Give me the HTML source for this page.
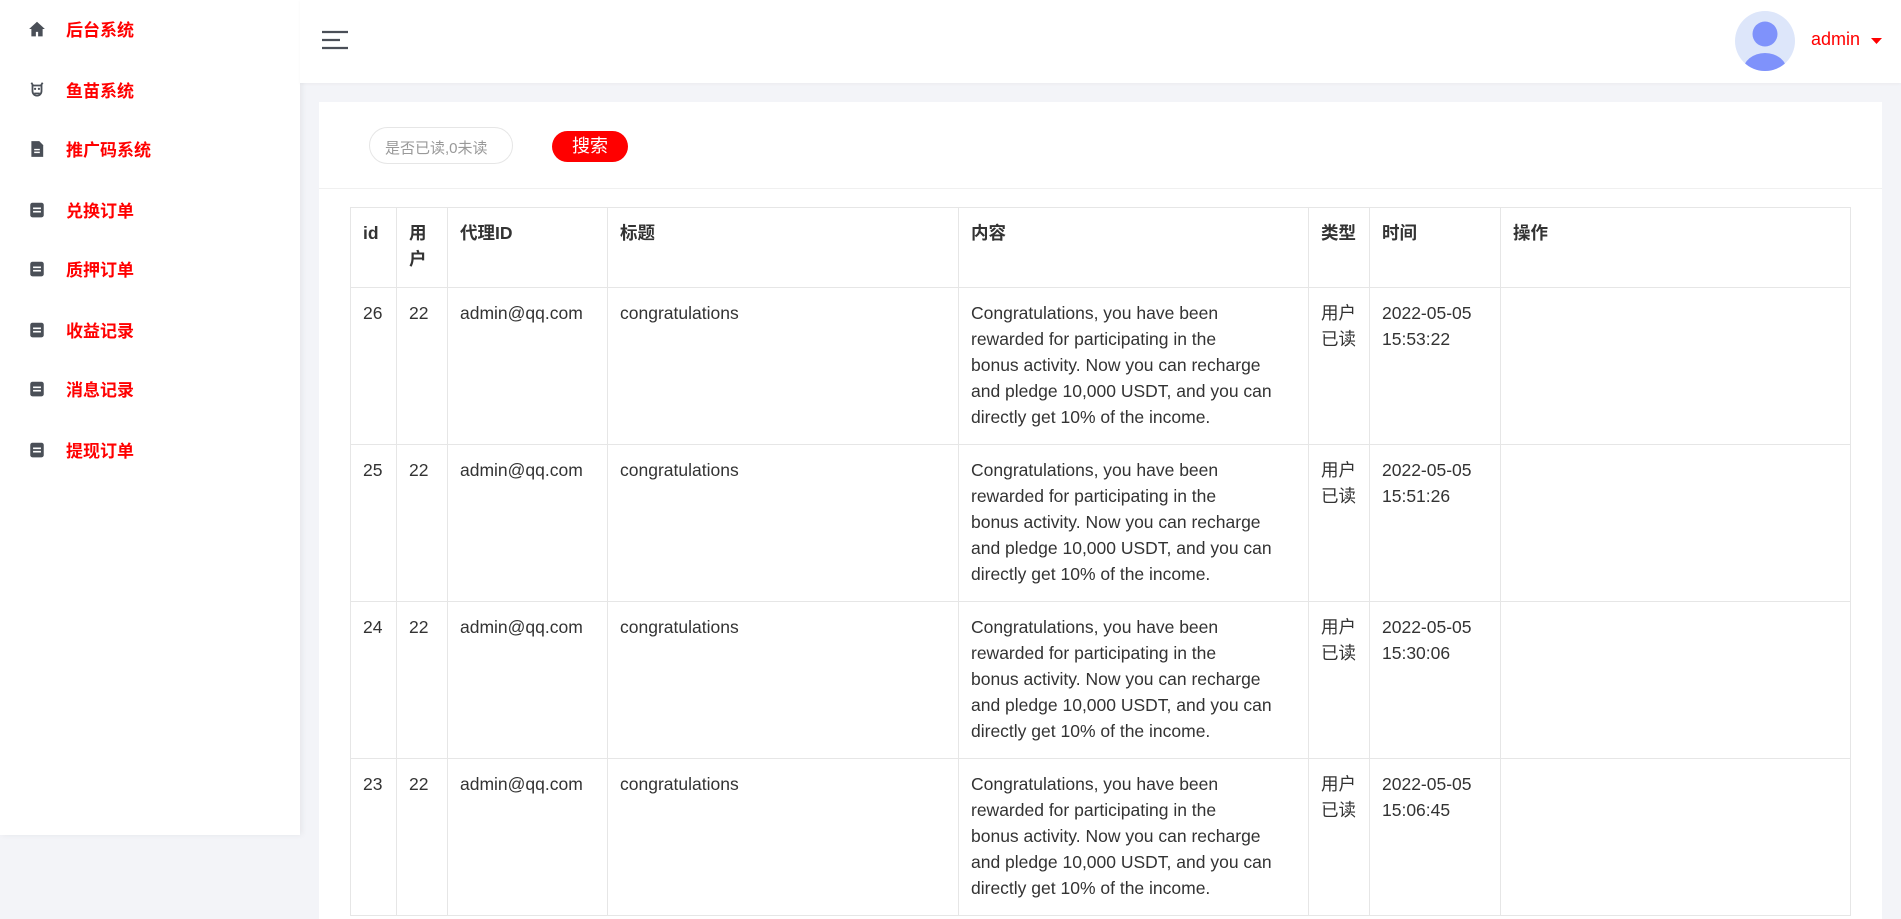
<!DOCTYPE html>
<html><head><meta charset="utf-8"><style>
*{box-sizing:border-box;margin:0;padding:0}
html,body{width:1901px;height:919px;overflow:hidden}
body{background:#f3f4f8;font-family:"Liberation Sans","Noto Sans CJK SC",sans-serif;color:#333;position:relative}
.side{position:absolute;left:0;top:0;width:300px;height:835px;background:#fff;box-shadow:2px 0 6px rgba(0,0,0,.06)}
.mi{position:absolute;left:0;height:30px;width:300px}
.mi svg{position:absolute;left:28px;top:6px;width:18px;height:18px}
.mi span{position:absolute;left:66px;top:2px;color:#f00;font-weight:bold;font-size:17px;white-space:nowrap;font-family:"Noto Sans CJK SC",sans-serif}
.hdr{position:absolute;left:300px;top:0;right:0;height:83px;background:#fff;box-shadow:0 1px 3px rgba(0,0,0,.04)}
.card{position:absolute;left:319px;top:102px;width:1563px;height:817px;background:#fff;overflow:hidden}
.inp{position:absolute;left:50px;top:25px;width:144px;height:37px;border:1px solid #e6e6e6;border-radius:19px;font-size:15px;color:#999;padding:9px 0 0 15px;white-space:nowrap;overflow:hidden}
.btn{position:absolute;left:233px;top:29px;width:76px;height:31px;border-radius:16px;background:#f00;color:#fff;font-size:18px;text-align:center;line-height:31px}
.div{position:absolute;left:0;right:0;top:86px;border-top:1px solid #f0f0f0}
table{position:absolute;left:31px;top:105px;border-collapse:collapse;font-size:17.5px;table-layout:fixed}
td,th{border:1px solid #e6e6e6;vertical-align:top;text-align:left;padding:12px 12px;line-height:26px;white-space:nowrap}
th{font-weight:bold;height:80px;padding-top:12px}
td{height:157px}
</style></head><body>
<div class="side">
 <div class="mi" style="top:14px"><svg viewBox="0 0 16 16"><path d="M8 1.5L1 8h2v6.5h4v-4h2v4h4V8h2z" fill="#4a4f57"/></svg><span>后台系统</span></div>
 <div class="mi" style="top:75px"><svg viewBox="0 0 16 16"><path d="M3 1.5l1.5 2.5h7L13 1.5M4 4h8v5a4 4 0 01-8 0z" fill="none" stroke="#4a4f57" stroke-width="1.6"/><circle cx="6.3" cy="7" r="1" fill="#4a4f57"/><circle cx="9.7" cy="7" r="1" fill="#4a4f57"/><path d="M5.5 11h5" stroke="#4a4f57" stroke-width="1.4"/></svg><span>鱼苗系统</span></div>
 <div class="mi" style="top:134px"><svg viewBox="0 0 16 16"><path d="M3 1h7l3.5 3.5V15H3z" fill="#4a4f57"/><path d="M5.5 8.5h5M5.5 11h5" stroke="#fff" stroke-width="1.3"/></svg><span>推广码系统</span></div>
 <div class="mi" style="top:195px"><svg viewBox="0 0 16 16"><rect x="2" y="1.5" width="12" height="13" rx="2" fill="#4a4f57"/><path d="M4.5 6.5h7M4.5 9.5h7" stroke="#fff" stroke-width="1.4"/></svg><span>兑换订单</span></div>
 <div class="mi" style="top:254px"><svg viewBox="0 0 16 16"><rect x="2" y="1.5" width="12" height="13" rx="2" fill="#4a4f57"/><path d="M4.5 6.5h7M4.5 9.5h7" stroke="#fff" stroke-width="1.4"/></svg><span>质押订单</span></div>
 <div class="mi" style="top:315px"><svg viewBox="0 0 16 16"><rect x="2" y="1.5" width="12" height="13" rx="2" fill="#4a4f57"/><path d="M4.5 6.5h7M4.5 9.5h7" stroke="#fff" stroke-width="1.4"/></svg><span>收益记录</span></div>
 <div class="mi" style="top:374px"><svg viewBox="0 0 16 16"><rect x="2" y="1.5" width="12" height="13" rx="2" fill="#4a4f57"/><path d="M4.5 6.5h7M4.5 9.5h7" stroke="#fff" stroke-width="1.4"/></svg><span>消息记录</span></div>
 <div class="mi" style="top:435px"><svg viewBox="0 0 16 16"><rect x="2" y="1.5" width="12" height="13" rx="2" fill="#4a4f57"/><path d="M4.5 6.5h7M4.5 9.5h7" stroke="#fff" stroke-width="1.4"/></svg><span>提现订单</span></div>
</div>
<div class="hdr">
 <svg style="position:absolute;left:21px;top:30px" width="28" height="20" viewBox="0 0 28 20"><path d="M1 2h26M1 10h18M1 18h26" stroke="#4a4f57" stroke-width="2.2"/></svg>
 <svg style="position:absolute;left:1434px;top:10px" width="62" height="62" viewBox="0 0 62 62"><defs><clipPath id="c"><circle cx="31" cy="31" r="30"/></clipPath></defs><circle cx="31" cy="31" r="30" fill="#dde6fa"/><g clip-path="url(#c)" fill="#7f92fb"><circle cx="31" cy="24" r="12.5"/><ellipse cx="31" cy="61" rx="22" ry="18"/></g></svg>
 <span style="position:absolute;left:1511px;top:29px;color:#f00;font-size:18px">admin</span>
 <svg style="position:absolute;left:1571px;top:38px" width="11" height="7" viewBox="0 0 11 7"><path d="M0 0h11L5.5 6z" fill="#f00"/></svg>
</div>
<div class="card">
 <div class="inp">是否已读,0未读</div>
 <div class="btn">搜索</div>
 <div class="div"></div>
 <table>
 <colgroup><col style="width:46px"><col style="width:51px"><col style="width:160px"><col style="width:351px"><col style="width:350px"><col style="width:61px"><col style="width:131px"><col style="width:350px"></colgroup>
 <tr><th>id</th><th>用<br>户</th><th>代理ID</th><th>标题</th><th>内容</th><th>类型</th><th>时间</th><th>操作</th></tr>
 <tr><td>26</td><td>22</td><td>admin@qq.com</td><td>congratulations</td><td>Congratulations, you have been<br>rewarded for participating in the<br>bonus activity. Now you can recharge<br>and pledge 10,000 USDT, and you can<br>directly get 10% of the income.</td><td>用户<br>已读</td><td>2022-05-05<br>15:53:22</td><td></td></tr>
 <tr><td>25</td><td>22</td><td>admin@qq.com</td><td>congratulations</td><td>Congratulations, you have been<br>rewarded for participating in the<br>bonus activity. Now you can recharge<br>and pledge 10,000 USDT, and you can<br>directly get 10% of the income.</td><td>用户<br>已读</td><td>2022-05-05<br>15:51:26</td><td></td></tr>
 <tr><td>24</td><td>22</td><td>admin@qq.com</td><td>congratulations</td><td>Congratulations, you have been<br>rewarded for participating in the<br>bonus activity. Now you can recharge<br>and pledge 10,000 USDT, and you can<br>directly get 10% of the income.</td><td>用户<br>已读</td><td>2022-05-05<br>15:30:06</td><td></td></tr>
 <tr><td>23</td><td>22</td><td>admin@qq.com</td><td>congratulations</td><td>Congratulations, you have been<br>rewarded for participating in the<br>bonus activity. Now you can recharge<br>and pledge 10,000 USDT, and you can<br>directly get 10% of the income.</td><td>用户<br>已读</td><td>2022-05-05<br>15:06:45</td><td></td></tr>
 </table>
</div>
</body></html>
